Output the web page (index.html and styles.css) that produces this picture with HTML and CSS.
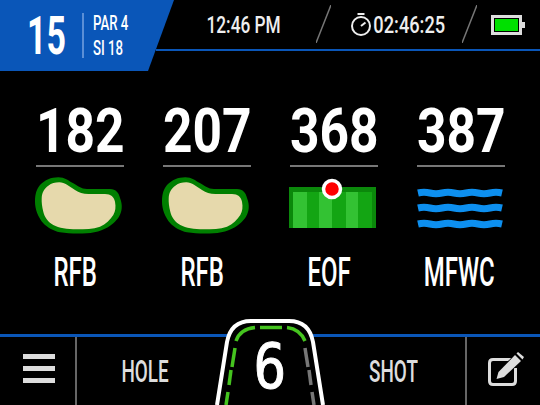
FILE: index.html
```html
<!DOCTYPE html>
<html lang="en">

<head>
    <meta charset="UTF-8">
    <meta name="viewport" content="width=device-width, initial-scale=1.0">
    <title>Golf GPS</title>
    <link rel="stylesheet" href="styles.css">
</head>

<body>
    <div class="screen">
        <header class="top">
            <div class="hole-badge">
                <div class="hole-number"><span>15</span></div>
                <div class="hole-info">
                    <span>PAR 4</span>
                    <span>SI 18</span>
                </div>
            </div>
            <div class="status">
                <div class="clock"><span>12:46 PM</span></div>
                <svg class="slash" width="15" height="38" viewBox="0 0 15 38"><path d="M15 0 L0 38" /></svg>
                <svg class="stopwatch" width="20" height="23" viewBox="0 0 20 23" fill="none" stroke="#eee" stroke-width="2">
                    <circle cx="10" cy="13" r="9" />
                    <path d="M6.500 1 H13.500" />
                    <path d="M10 13 L14.500 9.500" />
                </svg>
                <div class="timer"><span>02:46:25</span></div>
                <svg class="slash" width="15" height="38" viewBox="0 0 15 38"><path d="M15 0 L0 38" /></svg>
                <div class="battery"><div class="battery-fill"></div></div>
            </div>
        </header>

        <main class="targets">
            <div class="target">
                <div class="distance"><span>182</span></div>
                <svg class="target-icon" width="88" height="58" viewBox="0 0 88 58">
                    <path class="bunker-edge" d="M23.300 .300 C30 .300 33 3.500 38.300 6.300 C43 9 46 12 52 12 H75 C81 12 84 16 85 21 C86.500 25 87 28 86.700 31.300 C86 38 83 42 78.300 46.300 C72 52 62 56 51.700 56.300 C42 56.800 33 56.500 25 55.300 C18 54 12 50 8.300 46.300 C3 40 0 32 0 24.700 C0 16 2 12 5 8 C10 3 16 .300 23.300 .300 Z" />
                    <path class="bunker-sand" d="M24.300 5.300 C30 5.300 34 9.500 40 13 C44 15.500 48 17 53.300 17 H70 C76 17 79 20 80 24.700 C81 30 80.500 34 78.300 38 C75 43 71 47 65 49.700 C58 52 50 52.300 41.700 52.300 C32 52.300 24 51 18.300 48 C13 45 9.500 40 8.300 34.700 C7 30 6.500 25 6.700 21.300 C7 15 9.500 11.500 13.300 8.700 C16.500 6.300 20 5.300 24.300 5.300 Z" />
                </svg>
                <div class="target-name"><span>RFB</span></div>
            </div>
            <div class="target">
                <div class="distance"><span>207</span></div>
                <svg class="target-icon" width="88" height="58" viewBox="0 0 88 58">
                    <path class="bunker-edge" d="M23.300 .300 C30 .300 33 3.500 38.300 6.300 C43 9 46 12 52 12 H75 C81 12 84 16 85 21 C86.500 25 87 28 86.700 31.300 C86 38 83 42 78.300 46.300 C72 52 62 56 51.700 56.300 C42 56.800 33 56.500 25 55.300 C18 54 12 50 8.300 46.300 C3 40 0 32 0 24.700 C0 16 2 12 5 8 C10 3 16 .300 23.300 .300 Z" />
                    <path class="bunker-sand" d="M24.300 5.300 C30 5.300 34 9.500 40 13 C44 15.500 48 17 53.300 17 H70 C76 17 79 20 80 24.700 C81 30 80.500 34 78.300 38 C75 43 71 47 65 49.700 C58 52 50 52.300 41.700 52.300 C32 52.300 24 51 18.300 48 C13 45 9.500 40 8.300 34.700 C7 30 6.500 25 6.700 21.300 C7 15 9.500 11.500 13.300 8.700 C16.500 6.300 20 5.300 24.300 5.300 Z" />
                </svg>
                <div class="target-name"><span>RFB</span></div>
            </div>
            <div class="target">
                <div class="distance"><span>368</span></div>
                <svg class="target-icon" width="88" height="58" viewBox="0 0 88 58">
                    <rect x="-1" y="10" width="88" height="41" fill="#0b880b" />
                    <rect x="4" y="15" width="14" height="36" fill="#33c233" />
                    <rect x="18" y="15" width="12" height="36" fill="#13a513" />
                    <rect x="30" y="15" width="13" height="36" fill="#33c233" />
                    <rect x="43" y="15" width="14" height="36" fill="#13a513" />
                    <rect x="57" y="15" width="12" height="36" fill="#33c233" />
                    <rect x="69" y="15" width="14" height="36" fill="#13a513" />
                    <circle cx="43" cy="12" r="8.500" fill="#f00" stroke="#fff" stroke-width="3.500" />
                </svg>
                <div class="target-name"><span>EOF</span></div>
            </div>
            <div class="target">
                <div class="distance"><span>387</span></div>
                <svg class="target-icon" width="88" height="58" viewBox="0 0 88 58" fill="none" stroke="#0d8fef" stroke-width="7">
                    <path d="M2 16 q6 -1.400 12 0 t12 0 t12 0 t12 0 t12 0 t12 0 t12 0" />
                    <path d="M2 31 q6 -1.400 12 0 t12 0 t12 0 t12 0 t12 0 t12 0 t12 0" />
                    <path d="M2 47 q6 -1.400 12 0 t12 0 t12 0 t12 0 t12 0 t12 0 t12 0" />
                </svg>
                <div class="target-name target-name-wide"><span>MFWC</span></div>
            </div>
        </main>

        <footer class="bottom">
            <div class="menu-btn">
                <span class="menu-bar"></span>
                <span class="menu-bar"></span>
                <span class="menu-bar"></span>
            </div>
            <div class="nav-label nav-hole"><span>HOLE</span></div>
            <div class="nav-label nav-shot"><span>SHOT</span></div>
            <div class="edit-btn">
                <svg width="42" height="36" viewBox="0 0 42 36">
                    <path d="M27 8.500 H9 Q5.500 8.500 5.500 12 V30 Q5.500 33.500 9 33.500 H28 Q31.500 33.500 31.500 30 V17" fill="none" stroke="#ddd" stroke-width="3" />
                    <path d="M12.500 28 L14.500 21 L31 4 L37 10 L20 26 Z" fill="#ddd" stroke="#000" stroke-width="1.500" paint-order="stroke" />
                    <path d="M32.500 2.500 L34 1 L40 6 L38.500 8.500 Z" fill="#ddd" />
                </svg>
            </div>
        </footer>

        <div class="club-tab">
            <svg class="club-shape" width="110" height="87" viewBox="0 0 110 87" fill="#000">
                <path class="club-edge" d="M2 87 L12 24 Q16 3 36 3 H74 Q94 3 98 24 L108 87" />
                <g class="club-green">
                    <path d="M21 23 Q25 11 40 9.500" />
                    <path d="M45 9.500 H67" />
                    <path d="M72 9.500 Q85 11 90 23" />
                    <path d="M20 30 L17 49" />
                    <path d="M16 52 L14 67" />
                    <path d="M13 74 L11 87" />
                </g>
                <g class="club-grey">
                    <path d="M90 30 L93 49" />
                    <path d="M94 52 L96 67" />
                    <path d="M97 74 L99 87" />
                </g>
            </svg>
            <span class="club-number">6</span>
        </div>
    </div>
</body>

</html>
```

FILE: styles.css
```css
body {
    margin: 0;
    background: #000;
    color: #fff;
    font-family: Roboto, "Liberation Sans", sans-serif;
    font-weight: 500;
}

.screen {
    position: relative;
    width: 540px;
    height: 405px;
    overflow: hidden;
    display: flex;
    flex-direction: column;
}

.hole-number span,
.hole-info span,
.clock span,
.timer span,
.distance span,
.target-name span,
.nav-label span {
    display: inline-block;
    white-space: nowrap;
}

/* top bar */
.top {
    display: flex;
    height: 71px;
}

.hole-badge {
    width: 174px;
    height: 71px;
    flex-shrink: 0;
    background: #0a56b8;
    clip-path: polygon(0 0, 174px 0, 148px 71px, 0 71px);
    display: flex;
    align-items: center;
    box-sizing: border-box;
    padding-left: 27px;
}

.hole-number {
    width: 38px;
    margin-right: 17px;
    display: flex;
    justify-content: center;
    font-size: 53px;
    font-weight: bold;
}

.hole-number span {
    transform: scaleX(.64);
}

.hole-info {
    display: flex;
    flex-direction: column;
    gap: 5px;
    padding-left: 9px;
    border-left: 2px solid #5b8fd6;
    font-size: 20px;
    line-height: 20px;
}

.hole-info span {
    transform: scaleX(.66);
    transform-origin: left;
}

.status {
    flex: 1;
    margin-left: -18px;
    height: 51px;
    box-sizing: border-box;
    border-bottom: 2px solid #0a56b8;
    display: flex;
    align-items: center;
    font-size: 24px;
    color: #eee;
}

.clock {
    margin-left: 51px;
    width: 73px;
    flex-shrink: 0;
    display: flex;
    justify-content: center;
}

.clock span {
    transform: scaleX(.72);
}

.slash {
    margin: -1px 0 0 36px;
    flex-shrink: 0;
}

.slash path {
    stroke: #777;
    stroke-width: 1.500;
    fill: none;
}

.stopwatch {
    flex-shrink: 0;
    margin: -1px 0 0 20px;
}

.timer {
    width: 71px;
    flex-shrink: 0;
    margin-left: 3px;
    display: flex;
    justify-content: center;
}

.timer span {
    transform: scaleX(.76);
}

.timer + .slash {
    margin-left: 17px;
}

.battery {
    position: relative;
    width: 31px;
    height: 20px;
    margin: 1px 0 0 14px;
    box-sizing: border-box;
    border: 3px solid #ddd;
    padding: 1px;
}

.battery::after {
    content: "";
    position: absolute;
    right: -6px;
    top: 4px;
    width: 3px;
    height: 6px;
    background: #ddd;
}

.battery-fill {
    height: 100%;
    background: #00e000;
}

/* distances */
.targets {
    flex: 1;
    display: flex;
    gap: 39px;
    padding-left: 36px;
}

.target {
    width: 88px;
}

.distance {
    height: 96px;
    box-sizing: border-box;
    border-bottom: 2px solid #777;
    display: flex;
    justify-content: center;
    font-size: 62px;
    font-weight: bold;
    line-height: 62px;
    padding-top: 29px;
}

.distance span {
    transform: scaleX(.83);
}

.target-icon {
    display: block;
    margin: 10px 0 0 -1px;
}

.target-name {
    font-size: 40px;
    line-height: 42px;
    margin-top: 17px;
    padding-right: 9px;
    display: flex;
    justify-content: center;
}

.target-name-wide {
    padding-right: 3px;
}

.target-name span {
    transform: scaleX(.6);
}

.bunker-edge {
    fill: #007f00;
}

.bunker-sand {
    fill: #e6d9ac;
}

/* bottom bar */
.bottom {
    height: 71px;
    box-sizing: border-box;
    border-top: 3px solid #0a56b8;
    display: flex;
    align-items: center;
}

.menu-btn {
    width: 77px;
    height: 100%;
    box-sizing: border-box;
    border-right: 2px solid #666;
    display: flex;
    flex-direction: column;
    gap: 7px;
    padding: 17px 0 0 23px;
}

.menu-bar {
    width: 32px;
    height: 5px;
    background: #ddd;
}

.nav-label {
    width: 48px;
    display: flex;
    justify-content: center;
    font-size: 32px;
    color: #ddd;
}

.nav-label span {
    transform: scaleX(.59);
}

.nav-hole {
    margin-left: 44px;
}

.nav-shot {
    margin: 0 48px 0 auto;
}

.edit-btn {
    width: 75px;
    height: 100%;
    box-sizing: border-box;
    border-left: 2px solid #666;
    padding: 14px 0 0 17px;
}

/* club selector sits over the bottom bar */
.club-tab {
    position: absolute;
    left: 215px;
    top: 318px;
    width: 110px;
    height: 87px;
}

.club-shape {
    display: block;
}

.club-edge {
    stroke: #fff;
    stroke-width: 4;
}

.club-green path,
.club-grey path {
    fill: none;
    stroke-width: 3.500;
}

.club-green path {
    stroke: #45c41f;
}

.club-grey path {
    stroke: #777;
}

.club-number {
    position: absolute;
    left: 0;
    right: 0;
    top: 13px;
    text-align: center;
    font-family: "DejaVu Sans Mono", monospace;
    font-size: 62px;
    font-weight: normal;
    line-height: 72px;
    -webkit-text-stroke: 1px #fff;
    transform: scaleX(.88);
}
```
